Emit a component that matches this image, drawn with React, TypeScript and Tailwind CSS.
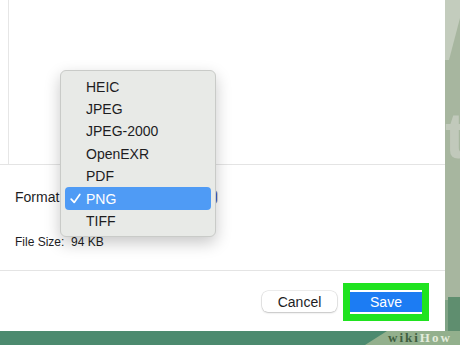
import React from "react";

const FORMATS = ["HEIC", "JPEG", "JPEG-2000", "OpenEXR", "PDF", "PNG", "TIFF"];
const SELECTED = "PNG";

const sans = { fontFamily: '"Liberation Sans", Arial, sans-serif' };

export default function App() {
  return (
    <div
      className="w-[460px] h-[345px] overflow-hidden flex flex-col bg-[#a7b69f] text-[#1d1d1f]"
      style={sans}
    >
      <div className="flex h-[331px]">
        {/* Save dialog */}
        <div className="relative w-[445px] h-full bg-white flex flex-col">
          {/* Preview area */}
          <div className="h-[165px] border-b border-[#e4e4e4] pl-[8px]">
            <div className="h-full border-l border-[#e6e6e6]" />
          </div>

          {/* Options */}
          <div className="h-[106px] border-b border-[#e4e4e4] pt-[23px] pl-[15px]">
            <div className="flex items-center h-[18px] gap-[4px]">
              <span className="text-[14px] leading-none">Format</span>
              <div className="w-[155px] h-[16px] rounded-[5px] bg-white border border-[#d0d0d0] flex justify-end">
                <div className="w-[14px] h-full rounded-r-[4px] bg-[#3d5fc7]" />
              </div>
            </div>
            <div className="mt-[29px] text-[12px] leading-[14px] whitespace-pre">File Size:  94 KB</div>
          </div>

          {/* Buttons */}
          <div className="flex-1 flex items-center justify-end gap-[6px] pr-[16px] pt-[1px]">
            <button className="w-[75px] h-[21px] rounded-[6px] bg-white text-[14px] leading-none text-[#1d1d1f] shadow-[0_0_0_0.5px_rgba(0,0,0,0.14),0_1px_2px_rgba(0,0,0,0.18)]">
              Cancel
            </button>
            <div className="border-[7px] border-[#1fe31f]">
              <button className="w-[72px] h-[20px] bg-[#1c7cf3] text-white text-[14px] leading-none">
                Save
              </button>
            </div>
          </div>

          {/* Format pop-up menu */}
          <div className="absolute left-[60px] top-[70px] w-[156px] h-[167px] rounded-[6px] bg-[#e8eae7] border border-[#c9cbc8] shadow-[0_6px_16px_rgba(0,0,0,0.22)] pt-[4.5px] px-[4px]">
            {FORMATS.map((f) => {
              const sel = f === SELECTED;
              return (
                <div
                  key={f}
                  className={
                    sel
                      ? "h-[22.4px] flex items-center rounded-[4px] bg-[#4f9bf5] text-white"
                      : "h-[22.4px] flex items-center text-[#1d1d1f]"
                  }
                >
                  <span className="w-[21px] pl-[5px] flex items-center">
                    {sel && (
                      <svg width="11" height="11" viewBox="0 0 11 11">
                        <path d="M1.2 6.2 L4.2 9.4 L9.8 1.4" fill="none" stroke="white" strokeWidth="1.7" strokeLinecap="round" strokeLinejoin="round" />
                      </svg>
                    )}
                  </span>
                  <span className="text-[14px] leading-none">{f}</span>
                </div>
              );
            })}
          </div>
        </div>

        {/* Backdrop edge */}
        <div className="relative flex-1 overflow-hidden">
          <svg width="15" height="331" viewBox="0 0 15 331" className="block">
            <rect width="15" height="331" fill="#a7b69f" />
            <polygon points="0,0 15,0 15,18 4,60 0,60" fill="#c3ccbd" />
            <rect x="3" y="297" width="12" height="34" fill="#5f8e6f" />
            <rect x="0" y="300" width="3" height="31" fill="#7fa385" />
          </svg>
          <span
            className="absolute left-[0px] top-[104px] text-[64px] leading-none font-bold text-[#c1c9bb]"
            style={sans}
          >
            t
          </span>
        </div>
      </div>

      {/* Bottom strip with watermark */}
      <div className="relative h-[14px] bg-[#4c8a6f] overflow-hidden">
        <svg width="460" height="14" viewBox="0 0 460 14" className="block">
          <polygon points="365,14 387,0 460,0 460,14" fill="#93b08d" />
        </svg>
        <span
          className="absolute left-[388px] top-0 text-[13px] font-bold tracking-[2px] leading-[14px]"
          style={{ fontFamily: '"Liberation Serif", "Times New Roman", serif' }}
        >
          <span className="text-[#3f5e3f]">wiki</span>
          <span className="text-[#e3ecdc]">How</span>
        </span>
      </div>
    </div>
  );
}
